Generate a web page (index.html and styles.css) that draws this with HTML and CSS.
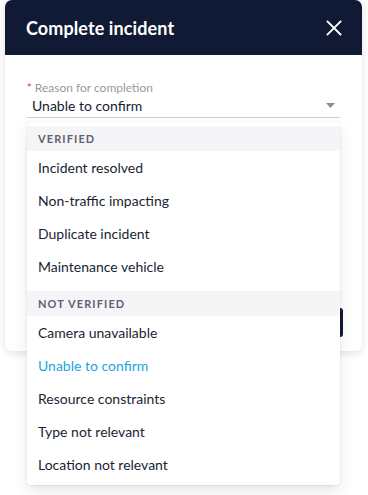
FILE: index.html
```html
<!DOCTYPE html>
<html>
<head>
<meta charset="utf-8">
<link rel="stylesheet" href="styles.css">
</head>
<body>
<div class="modal">
  <div class="modal-header">
    <span class="modal-title">Complete incident</span>
    <svg class="close" width="16" height="16" viewBox="0 0 16 16"><path d="M1.5 1.5 L14.5 14.5 M14.5 1.5 L1.5 14.5" stroke="#fff" stroke-width="1.8" stroke-linecap="square"/></svg>
  </div>
  <div class="modal-body">
    <div class="field">
      <div class="label"><span class="req">*</span> Reason for completion</div>
      <div class="select">
        <span class="value">Unable to confirm</span>
        <svg class="caret" width="9" height="5" viewBox="0 0 9 5"><path d="M0 0 H9 L4.5 5 Z" fill="#8c8c8c"/></svg>
      </div>
      <div class="dropdown">
        <div class="group">VERIFIED</div>
        <div class="option">Incident resolved</div>
        <div class="option">Non-traffic impacting</div>
        <div class="option">Duplicate incident</div>
        <div class="option">Maintenance vehicle</div>
        <div class="group gap">NOT VERIFIED</div>
        <div class="option">Camera unavailable</div>
        <div class="option selected">Unable to confirm</div>
        <div class="option">Resource constraints</div>
        <div class="option">Type not relevant</div>
        <div class="option">Location not relevant</div>
      </div>
    </div>
    <div class="footer">
      <button class="btn-primary">Complete</button>
    </div>
  </div>
</div>
</body>
</html>
```
FILE: styles.css
```css
* { box-sizing: border-box; }
body {
  margin: 0;
  background: #ffffff;
  font-family: Lato, "Noto Sans", sans-serif;
  width: 368px;
  height: 495px;
  overflow: hidden;
}
.modal {
  margin: 0 0 0 5px;
  width: 357px;
  border-radius: 7px;
  background: #fff;
  box-shadow: 0 2px 8px rgba(0,0,0,0.12);
}
.modal-header {
  height: 55px;
  background: #111a35;
  border-radius: 7px 7px 0 0;
  display: flex;
  align-items: center;
  justify-content: space-between;
  padding: 0 20px 0 21px;
}
.modal-title {
  color: #fff;
  font-size: 18px;
  font-weight: 700;
  letter-spacing: 0.1px;
}
.close { display: block; margin-top: 1px; }
.modal-body {
  height: 296px;
  padding: 25px 19px 14px 22px;
  display: flex;
  flex-direction: column;
}
.field {
  position: relative;
  width: 313px;
}
.label {
  font-size: 12px;
  color: #9a9a9a;
  line-height: 15px;
  height: 15px;
}
.req { color: #f5222d; font-size: 11px; }
.select {
  display: flex;
  align-items: center;
  justify-content: space-between;
  height: 23px;
  border-bottom: 1px solid #cfcfcf;
  padding: 0 5px 1px 5px;
}
.value {
  font-size: 14px;
  color: #151b33;
}
.dropdown {
  position: absolute;
  left: 0;
  top: 42px;
  width: 313px;
  background: #fff;
  padding: 4px 0;
  border-radius: 2px;
  box-shadow: 0 3px 6px -4px rgba(0,0,0,0.14), 0 6px 16px rgba(0,0,0,0.09), 0 0 1px rgba(0,0,0,0.25);
  z-index: 5;
}
.group {
  height: 25px;
  background: #f5f5f7;
  color: #5d6270;
  font-size: 11px;
  font-weight: 700;
  letter-spacing: 1.1px;
  display: flex;
  align-items: center;
  padding-left: 11px;
}
.group.gap { margin-top: 8px; }
.option {
  height: 33px;
  display: flex;
  align-items: center;
  padding-left: 11px;
  font-size: 14px;
  color: #1a1f33;
}
.option.selected { color: #1ba5df; }
.footer {
  margin-top: auto;
  display: flex;
  justify-content: flex-end;
}
.btn-primary {
  height: 29px;
  width: 90px;
  border: none;
  border-radius: 3px;
  background: #111a35;
  color: #fff;
  font-family: Lato, sans-serif;
  font-size: 14px;
}
```
